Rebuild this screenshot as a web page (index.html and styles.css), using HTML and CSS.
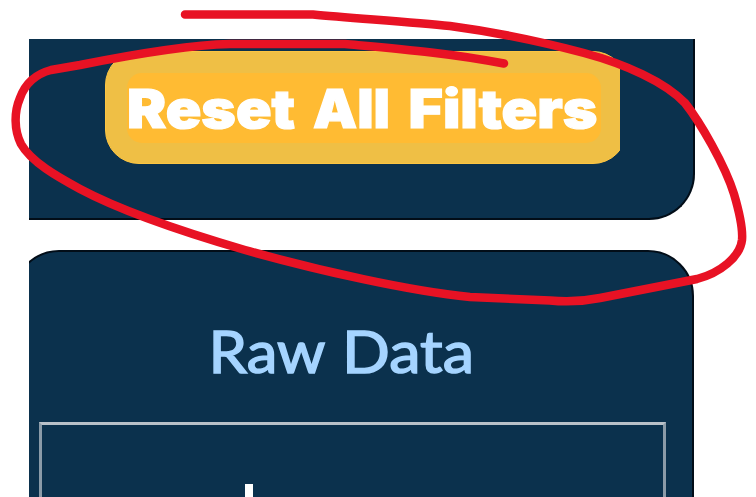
FILE: index.html
```html
<!DOCTYPE html>
<html lang="en">
<head>
<meta charset="utf-8">
<title>Filters</title>
<link rel="stylesheet" href="styles.css">
</head>
<body>
<main class="panel">
  <section class="card card-filters">
    <div class="button-clip">
      <button class="reset"><span class="reset-label"><svg class="label-svg" viewBox="0 0 474 69" width="474" height="69"><text x="0" y="55" textLength="168" lengthAdjust="spacingAndGlyphs">Reset</text><text x="186" y="55" textLength="77" lengthAdjust="spacingAndGlyphs">All</text><text x="281.500" y="55" textLength="189" lengthAdjust="spacingAndGlyphs">Filters</text></svg></span></button>
    </div>
  </section>
  <section class="card card-data">
    <h2 class="title"><svg class="title-svg" viewBox="0 0 270 70" width="270" height="70"><text x="-2.500" y="53" textLength="117" lengthAdjust="spacingAndGlyphs">Raw</text><text x="131" y="53" textLength="132" lengthAdjust="spacingAndGlyphs">Data</text></svg></h2>
    <div class="frame"><div class="stem"></div></div>
  </section>
</main>
<svg class="marker" viewBox="0 0 756 497" width="756" height="497">
  <path d="M185 14.5H313C350 18 410 22 450 26C510 34 550 44 584 53C625 64 665 82 685 103C700 122 725 165 734 194C739 211 743 229 742 240C740 257 720 273 697 279L600 298Q575 303 550 300.500L470 297C410 291 320 271 245 250C190 234 125 213 80 189C58 177 31 162 21 144C14 130 14 112 20 98C25 84 36 74 51 70L80 65C130 55 190 45 230 44H345C400 49 450 53 504 63.500"/>
</svg>
</body>
</html>
```
FILE: styles.css
```css
* { box-sizing: border-box; }
body {
  margin: 0;
  width: 756px;
  height: 497px;
  overflow: hidden;
  background: #fff;
  font-family: "Liberation Sans", sans-serif;
}
.panel {
  margin-left: 29px;
  padding-top: 39px;
  width: 667px;
  height: 497px;
  overflow: hidden;
}
.card {
  background: #0b314d;
  border: 2px solid #020d18;
}
.card-filters {
  width: 666px;
  height: 180.5px;
  border-top: 0;
  border-left: 0;
  border-radius: 0 0 46px 0;
  padding: 11.5px 0 0 76px;
}
.button-clip {
  width: 515px;
  height: 114px;
  overflow: hidden;
}
.reset {
  display: block;
  width: 522px;
  height: 113.5px;
  padding: 21px;
  border: 1px solid #fdc542;
  border-radius: 34px;
  background: #efbf45;
}
.reset-label {
  display: block;
  width: 474px;
  height: 70px;
  border-radius: 15px;
  background: #ffbb33;
}
.label-svg, .title-svg { display: block; overflow: visible; }
.label-svg text {
  font: 900 53px Inter, sans-serif;
  fill: #fff;
  stroke: #fff;
  stroke-width: 1.2px;
}
.card-data {
  margin: 30px 0 0 -16px;
  width: 680.5px;
  height: 300px;
  border-radius: 46px;
  padding: 68px 0 0 24px;
}
.title { margin: 0 0 0 172px; height: 102px; }
.title-svg text {
  font: 400 59px Lato, sans-serif;
  fill: #a5d4ff;
  stroke: #a5d4ff;
  stroke-width: 1.5px;
}
.frame {
  width: 627px;
  height: 200px;
  border: 3px solid #8b9ba8;
  border-top-color: #b9c1c9;
  padding: 59px 0 0 203px;
}
.stem { width: 8px; height: 50px; background: #fff; }
.marker { position: absolute; left: 0; top: 0; }
.marker path {
  fill: none;
  stroke: #e81224;
  stroke-width: 8.5px;
  stroke-linecap: round;
  stroke-linejoin: round;
}
```
